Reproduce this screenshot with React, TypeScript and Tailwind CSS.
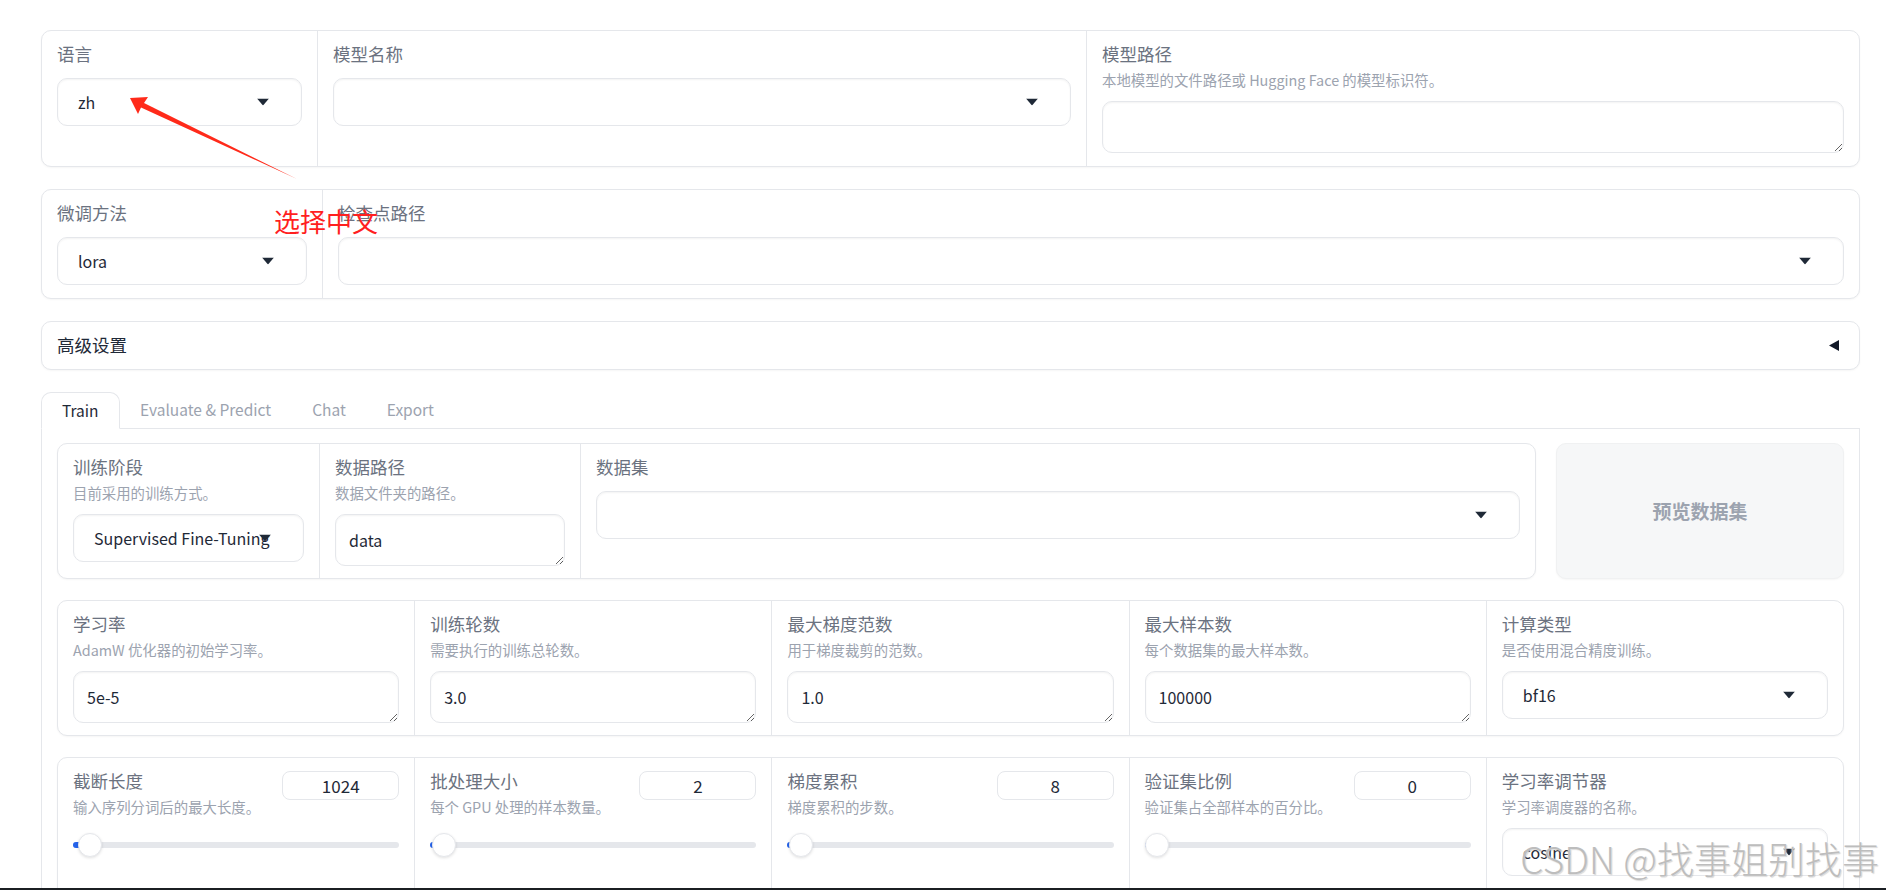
import React from "react";

const font = "font-['Noto_Sans_CJK_SC','Noto_Sans',sans-serif]";
const box =
  "rounded-[10px] border border-[#e5e7eb] bg-white shadow-[inset_0_1px_2px_rgba(0,0,0,0.05)]";
const panel =
  "flex rounded-[10px] border border-[#e5e7eb] bg-white shadow-[0_1px_2px_rgba(0,0,0,0.04)]";

function Label({ children }: { children: React.ReactNode }) {
  return <div className="whitespace-nowrap text-[17.5px] leading-[24px] text-[#6b7280]">{children}</div>;
}

function Info({ children }: { children: React.ReactNode }) {
  return <div className="mt-[5px] whitespace-nowrap text-[14.4px] leading-[18px] text-[#9ca3af]">{children}</div>;
}

function Caret() {
  return (
    <svg width="12" height="7" viewBox="0 0 12 7" className="block">
      <path d="M0 0h12L6 7z" fill="#1f2937" />
    </svg>
  );
}

function Dropdown({ value = "" }: { value?: string }) {
  return (
    <div className={`relative mt-[12px] flex h-[48px] items-center overflow-hidden pl-[20px] text-[16px] text-[#1f2937] ${box}`}>
      <span className="whitespace-nowrap">{value}</span>
      <span className="absolute right-[32px] top-1/2 -translate-y-1/2">
        <Caret />
      </span>
    </div>
  );
}

function TextBox({ value = "" }: { value?: string }) {
  return (
    <textarea
      readOnly
      rows={1}
      defaultValue={value}
      className={`mt-[12px] block h-[52px] w-full resize-y px-[13px] py-[13px] text-[16px] leading-[24px] text-[#1f2937] outline-none ${box}`}
    />
  );
}

function Slider({ fill }: { fill: number }) {
  return (
    <div className="relative mt-[17px] h-[24px]">
      <div className="absolute left-0 right-0 top-[9px] h-[6px] rounded-full bg-[#e5e7eb]" />
      <div className="absolute left-0 top-[9px] h-[6px] rounded-l-full bg-[#2563eb]" style={{ width: fill + 4 }} />
      <div
        className="absolute top-0 h-[24px] w-[24px] rounded-full border border-[#e5e7eb] bg-white shadow-[0_1px_3px_rgba(0,0,0,0.12)]"
        style={{ left: fill }}
      />
    </div>
  );
}

const trainRow = [
  { label: "学习率", info: "AdamW 优化器的初始学习率。", value: "5e-5" },
  { label: "训练轮数", info: "需要执行的训练总轮数。", value: "3.0" },
  { label: "最大梯度范数", info: "用于梯度裁剪的范数。", value: "1.0" },
  { label: "最大样本数", info: "每个数据集的最大样本数。", value: "100000" },
];

const sliderRow = [
  { label: "截断长度", info: "输入序列分词后的最大长度。", value: "1024", fill: 5 },
  { label: "批处理大小", info: "每个 GPU 处理的样本数量。", value: "2", fill: 2 },
  { label: "梯度累积", info: "梯度累积的步数。", value: "8", fill: 2 },
  { label: "验证集比例", info: "验证集占全部样本的百分比。", value: "0", fill: 0 },
];

export default function App() {
  return (
    <div className={`relative h-[890px] w-full overflow-hidden bg-white ${font}`}>
      <div className="flex flex-col gap-[22px] pl-[41px] pr-[26px] pt-[30px]">
        {/* model row */}
        <div className={panel}>
          <div className="w-[276px] border-r border-[#e5e7eb] px-[15px] pt-[11px]">
            <Label>语言</Label>
            <Dropdown value="zh" />
          </div>
          <div className="w-[769px] border-r border-[#e5e7eb] px-[15px] pt-[11px]">
            <Label>模型名称</Label>
            <Dropdown />
          </div>
          <div className="flex-1 px-[15px] pb-[13px] pt-[11px]">
            <Label>模型路径</Label>
            <Info>本地模型的文件路径或 Hugging Face 的模型标识符。</Info>
            <TextBox />
          </div>
        </div>

        {/* finetune row */}
        <div className={panel}>
          <div className="w-[281px] border-r border-[#e5e7eb] px-[15px] pb-[13px] pt-[11px]">
            <Label>微调方法</Label>
            <Dropdown value="lora" />
          </div>
          <div className="flex-1 px-[15px] pt-[11px]">
            <Label>检查点路径</Label>
            <Dropdown />
          </div>
        </div>

        {/* accordion */}
        <div className={`${panel} h-[49px] items-center justify-between pl-[15px] pr-[20px]`}>
          <span className="text-[17.5px] text-[#1f2937]">高级设置</span>
          <svg width="10" height="11" viewBox="0 0 10 11">
            <path d="M10 0v11L0 5.5z" fill="#111827" />
          </svg>
        </div>

        {/* tabs */}
        <div>
          <div className="flex h-[37px] items-end border-b border-[#e5e7eb] text-[15.5px]">
            <div className="-mb-px flex h-[37px] items-center rounded-t-[10px] border border-[#e5e7eb] border-b-white bg-white px-[20px] text-[#1f2937]">
              Train
            </div>
            {["Evaluate & Predict", "Chat", "Export"].map((t) => (
              <div key={t} className="flex h-[36px] items-center px-[20.5px] text-[#9ca3af]">
                {t}
              </div>
            ))}
          </div>

          <div className="flex flex-col gap-[21px] border-x border-[#e5e7eb] px-[15px] pb-[20px] pt-[14px]">
            <div className="flex gap-[20px]">
              <div className={`${panel} flex-1`}>
                <div className="w-[262px] border-r border-[#e5e7eb] px-[15px] pt-[11px]">
                  <Label>训练阶段</Label>
                  <Info>目前采用的训练方式。</Info>
                  <Dropdown value="Supervised Fine-Tuning" />
                </div>
                <div className="w-[261px] border-r border-[#e5e7eb] px-[15px] pb-[12px] pt-[11px]">
                  <Label>数据路径</Label>
                  <Info>数据文件夹的路径。</Info>
                  <TextBox value="data" />
                </div>
                <div className="flex-1 px-[15px] pt-[11px]">
                  <Label>数据集</Label>
                  <Dropdown />
                </div>
              </div>
              <button className="flex w-[288px] items-center justify-center rounded-[10px] border border-[#f0f1f2] bg-[#f6f7f8] text-[19px] font-semibold text-[#9ca3af] shadow-[0_1px_2px_rgba(0,0,0,0.04)]">
                预览数据集
              </button>
            </div>

            <div className={panel}>
              {trainRow.map((c) => (
                <div key={c.label} className="flex-1 border-r border-[#e5e7eb] px-[15px] pb-[12px] pt-[11px]">
                  <Label>{c.label}</Label>
                  <Info>{c.info}</Info>
                  <TextBox value={c.value} />
                </div>
              ))}
              <div className="flex-1 px-[15px] pt-[11px]">
                <Label>计算类型</Label>
                <Info>是否使用混合精度训练。</Info>
                <Dropdown value="bf16" />
              </div>
            </div>

            <div className={`${panel} h-[160px]`}>
              {sliderRow.map((c) => (
                <div key={c.label} className="flex-1 border-r border-[#e5e7eb] px-[15px] pt-[11px]">
                  <div className="flex h-[24px] items-start justify-between">
                    <Label>{c.label}</Label>
                    <div className="mt-[2px] flex h-[29px] w-[117px] items-center justify-center rounded-[8px] border border-[#e5e7eb] bg-white text-[17px] text-[#1f2937]">
                      {c.value}
                    </div>
                  </div>
                  <Info>{c.info}</Info>
                  <Slider fill={c.fill} />
                </div>
              ))}
              <div className="flex-1 px-[15px] pt-[11px]">
                <Label>学习率调节器</Label>
                <Info>学习率调度器的名称。</Info>
                <Dropdown value="cosine" />
              </div>
            </div>
          </div>
        </div>
      </div>

      {/* annotation */}
      <svg className="pointer-events-none absolute left-0 top-0" width="1886" height="890" viewBox="0 0 1886 890">
        <polygon points="130,98 148,97 144,103 297,179 141,107.5 138,114" fill="#ff2a1a" />
      </svg>
      <div className="absolute left-[274px] top-[208px] text-[26px] leading-[26px] text-[#ff1f1f]">选择中文</div>

      <div className="absolute right-[7px] bottom-[13px] text-[37px] leading-[37px] font-light text-[#bdbdbd] [text-shadow:0_0_2px_rgba(255,255,255,0.95),1px_1px_1px_rgba(0,0,0,0.18)]">
        CSDN @找事姐别找事
      </div>
      <div className="absolute bottom-0 left-0 h-[2px] w-full bg-[#1b1f23]" />
    </div>
  );
}
